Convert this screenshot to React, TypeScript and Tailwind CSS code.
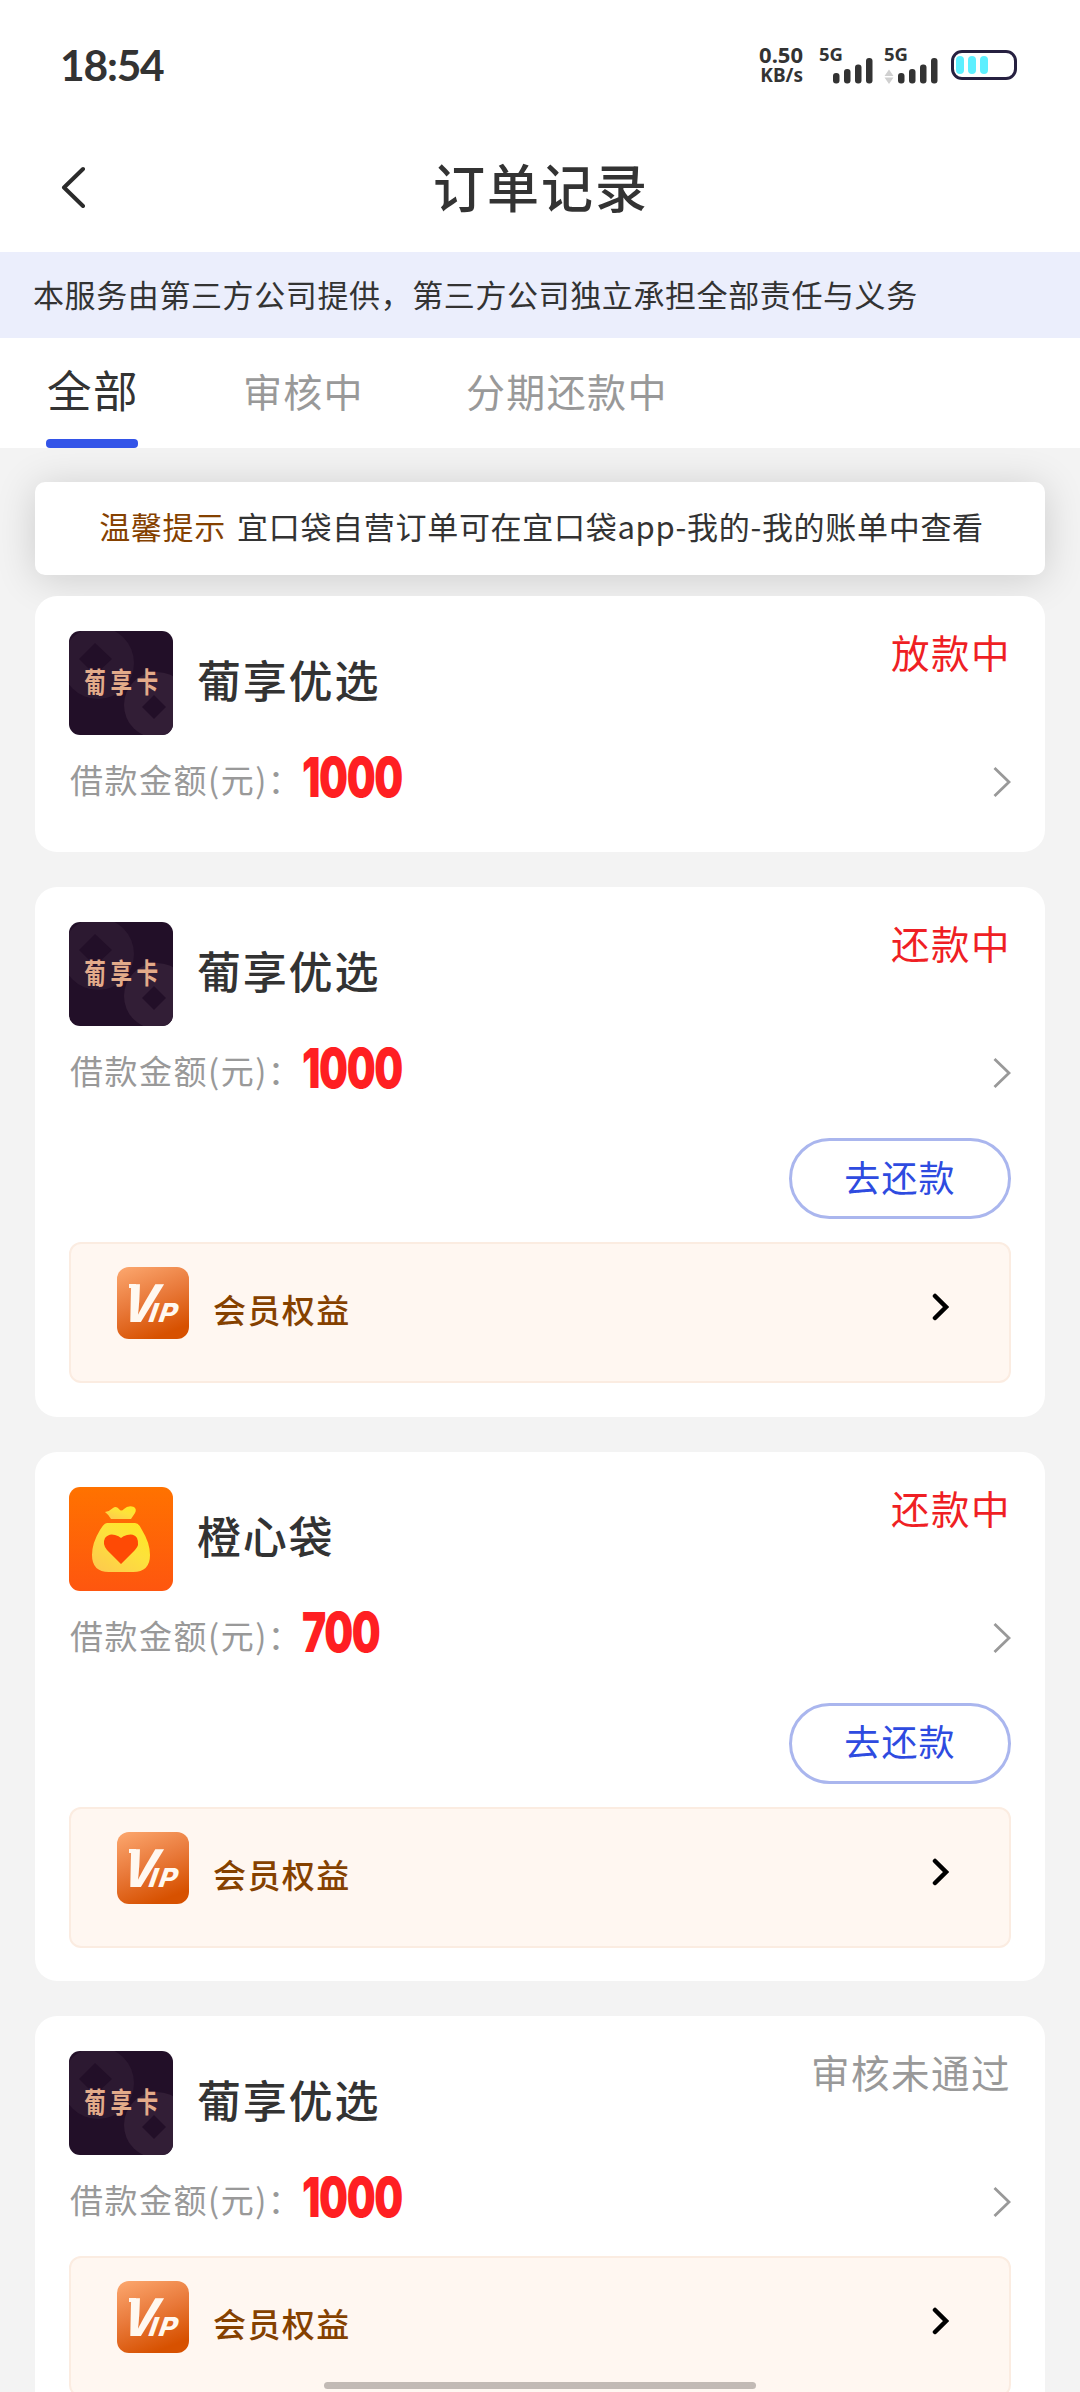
import { clsx } from 'clsx'

type Order = {
  logo: 'puxiang' | 'chengxin'
  name: string
  amount: number
  status: string
  failed?: boolean
  repay?: boolean
  vip?: boolean
}

const orders: Order[] = [
  { logo: 'puxiang', name: '葡享优选', amount: 1000, status: '放款中' },
  { logo: 'puxiang', name: '葡享优选', amount: 1000, status: '还款中', repay: true, vip: true },
  { logo: 'chengxin', name: '橙心袋', amount: 700, status: '还款中', repay: true, vip: true },
  { logo: 'puxiang', name: '葡享优选', amount: 1000, status: '审核未通过', failed: true, vip: true },
]

function PuxiangLogo() {
  return (
    <svg viewBox="0 0 104 104" className="h-[104px] w-[104px] shrink-0 rounded-[11px] bg-[#220f28]">
      <circle cx="29" cy="32" r="36" fill="#2c1931" />
      <circle cx="88" cy="74" r="33" fill="#321e36" />
      <path d="M26 12 L43 28 L26 44 L10 28 Z" fill="#220f28" />
      <path d="M85 64 L97 76 L85 88 L73 76 Z" fill="#220f28" />
      <g
        fill="#e3ab8a"
        textAnchor="middle"
        className="font-['Noto_Sans_CJK_SC',sans-serif] text-[24px] font-bold"
        transform="translate(0 62) scale(0.9 1.2)"
      >
        <text x="29" y="0">葡</text>
        <text x="58" y="0">享</text>
        <text x="87" y="0">卡</text>
      </g>
    </svg>
  )
}

function ChengxinLogo() {
  return (
    <svg viewBox="0 0 104 104" className="h-[104px] w-[104px] shrink-0 rounded-[11px]">
      <defs>
        <linearGradient id="orange" x1="0" y1="0" x2="0" y2="1">
          <stop offset="0" stopColor="#ff7200" />
          <stop offset="1" stopColor="#fe560f" />
        </linearGradient>
        <linearGradient id="bag" x1="1" y1="0" x2="0.2" y2="1">
          <stop offset="0" stopColor="#ffe81f" />
          <stop offset="0.5" stopColor="#fde13c" />
          <stop offset="1" stopColor="#fdcb4c" />
        </linearGradient>
      </defs>
      <rect width="104" height="104" fill="url(#orange)" />
      <path
        d="M36 25 Q41 24 44 21 Q47 18.500 50 22 Q52 25 55 22 Q59 18 65 20 Q68 22 66 26 L62 32 H42 Q40 28 36 25 Z"
        fill="url(#bag)"
      />
      <path
        d="M38 36 H66 Q70 36 73 43 Q81 56 81 68 Q81 85 64 85 H40 Q23 85 23 68 Q23 56 31 43 Q35 36 38 36 Z"
        fill="url(#bag)"
      />
      <path
        d="M52 77 L38 63 Q33 57 36 51 Q40 46 46 48 Q50 49 52 51 Q54 49 58 48 Q65 46 68 51 Q71 58 66 63 Z"
        fill="#fe4a05"
      />
    </svg>
  )
}

function VipIcon() {
  return (
    <svg viewBox="0 0 72 72" className="h-[72px] w-[72px] shrink-0 rounded-[12px]">
      <defs>
        <linearGradient id="vip" x1="0.1" y1="0" x2="0.5" y2="1">
          <stop offset="0" stopColor="#fba56c" />
          <stop offset="0.5" stopColor="#e97a3b" />
          <stop offset="1" stopColor="#d75100" />
        </linearGradient>
      </defs>
      <rect width="72" height="72" fill="url(#vip)" />
      <rect x="12" y="17" width="7" height="4" fill="#fff8f0" />
      <g fill="#fff8f0" className="font-['Inter',sans-serif] font-extrabold italic" transform="translate(0 55) skewX(-10)">
        <text x="3" y="0" textLength="35" lengthAdjust="spacingAndGlyphs" className="text-[52px]">V</text>
        <text x="31" y="0" textLength="8" lengthAdjust="spacingAndGlyphs" className="text-[26px]">I</text>
        <text x="41" y="0" textLength="18" lengthAdjust="spacingAndGlyphs" className="text-[26px]">P</text>
      </g>
    </svg>
  )
}

function Signal({ arrows }: { arrows?: boolean }) {
  return (
    <svg viewBox="0 0 56 40" className="h-10 w-14 overflow-visible">
      <text
        x="0"
        y="16"
        fill="#333"
        textLength="24"
        lengthAdjust="spacingAndGlyphs"
        className="font-['Noto_Sans',sans-serif] text-[18px] font-bold"
      >
        5G
      </text>
      <g fill="#333">
        <rect x="14" y="28" width="6.500" height="10.500" rx="3" />
        <rect x="25" y="24" width="6.500" height="14.500" rx="3" />
        <rect x="36" y="19.500" width="6.500" height="19" rx="3" />
        <rect x="47" y="13" width="6.500" height="25.500" rx="3" />
      </g>
      {arrows && <path d="M0.500 31 L5 24.500 L9.500 31 Z M0.500 32.500 L5 39 L9.500 32.500 Z" fill="#d0d0d0" />}
    </svg>
  )
}

function StatusBar() {
  return (
    <div className="flex h-[128px] shrink-0 items-center justify-between pt-[2px] pr-[63px] pl-[60px] text-[#333]">
      <span className="font-['Lato',sans-serif] text-[42.500px] leading-none font-bold tracking-[-1.200px]">18:54</span>
      <div className="flex items-center">
        <div className="mr-[16px] mb-[2px] flex flex-col items-end font-['Noto_Sans',sans-serif] font-bold">
          <span className="text-[22px] leading-[21px]">0.50</span>
          <span className="text-[19px] leading-[20px]">KB/s</span>
        </div>
        <div className="mr-[9px]">
          <Signal />
        </div>
        <div className="mr-[11px]">
          <Signal arrows />
        </div>
        <div className="flex h-[30px] w-[66px] items-center gap-1 rounded-[11px] border-3 border-[#262040] pl-[2px]">
          <i className="h-[18px] w-2 rounded-full bg-[#5eefff]" />
          <i className="h-[18px] w-2 rounded-full bg-[#5eefff]" />
          <i className="h-[18px] w-2 rounded-full bg-[#5eefff]" />
        </div>
      </div>
    </div>
  )
}

function OrderCard({ order }: { order: Order }) {
  return (
    <div
      className={clsx(
        'mb-[35px] shrink-0 rounded-[22px] bg-white px-[34px] pt-[35px]',
        order.vip ? 'pb-[33.500px]' : 'pb-[37px]'
      )}
    >
      <div className="flex h-[104px]">
        {order.logo === 'puxiang' ? <PuxiangLogo /> : <ChengxinLogo />}
        <span className="mb-[8px] ml-6 flex-1 self-center text-[44px] leading-none font-medium tracking-[1.800px]">
          {order.name}
        </span>
        <span
          className={clsx(
            'mt-[1px] text-[38.500px] leading-none tracking-[1.500px]',
            order.failed ? 'text-[#999]' : 'text-[#ef1f24]'
          )}
        >
          {order.status}
        </span>
      </div>

      <div className="flex h-[80px] items-center pt-[14px]">
        <span className="mb-[5px] w-[233px] shrink-0 pl-px text-[33px] leading-none tracking-[1.500px] whitespace-nowrap text-[#999]">
          借款金额(元)：
        </span>
        <span className="mb-[10px] origin-left scale-x-[0.740] font-['Inter',sans-serif] text-[55px] leading-none font-black tracking-[-1.800px] text-[#ff1f22]">
          {order.amount}
        </span>
        <svg viewBox="0 0 18 30" className="ml-auto h-[30px] w-[18px]" fill="none" stroke="#999" strokeWidth="2.800">
          <path d="M1.500 1 L16 15 L1.500 29" />
        </svg>
      </div>

      {order.repay && (
        <button className="mt-[32px] ml-auto flex h-[81px] w-[222px] items-center justify-center rounded-full border-3 border-[#aab6ee] pb-[6px] text-[36px] leading-none tracking-[1.200px] text-[#2e4be0]">
          去还款
        </button>
      )}

      {order.vip && (
        <div
          className={clsx(
            'flex h-[141px] items-start rounded-[12px] border-2 border-[#fbece1] bg-[#fff7f1] pt-[23px] pr-[60px] pl-[46px]',
            order.repay ? 'mt-[23px]' : 'mt-[21px]'
          )}
        >
          <VipIcon />
          <span className="mt-[26px] ml-6 text-[33px] leading-none font-medium tracking-[1.400px] text-[#854100]">
            会员权益
          </span>
          <svg
            viewBox="0 0 17 28"
            className="mt-[26px] ml-auto h-7 w-[17px]"
            fill="none"
            stroke="#000"
            strokeWidth="4.500"
            strokeLinecap="round"
          >
            <path d="M3 3 L14 14 L3 25" />
          </svg>
        </div>
      )}
    </div>
  )
}

export default function App() {
  return (
    <div
      lang="zh-CN"
      className="relative flex h-[2392px] w-[1080px] flex-col overflow-hidden bg-[#f3f3f3] font-['Noto_Sans_CJK_SC',sans-serif] text-[#333]"
    >
      <div className="bg-white">
        <StatusBar />
        <header className="flex h-[124px] items-center px-[61px] pb-[7px]">
          <svg
            viewBox="0 0 26 42"
            className="h-[42px] w-[26px]"
            fill="none"
            stroke="#2b2b2b"
            strokeWidth="4"
            strokeLinecap="round"
            strokeLinejoin="round"
          >
            <path d="M22 3 L3 21.500 L22 40" />
          </svg>
          <h1 className="mr-[24px] mb-[2px] flex-1 text-center text-[52px] leading-none font-medium tracking-[2px]">
            订单记录
          </h1>
        </header>
      </div>

      <div className="flex h-[86px] shrink-0 items-center bg-[#ebeefc] pb-[4px] pl-[33px] text-[31px] leading-none tracking-[0.600px]">
        本服务由第三方公司提供，第三方公司独立承担全部责任与义务
      </div>

      <nav className="flex h-[110px] shrink-0 bg-white pl-[46px] leading-none text-[#999]">
        <div className="flex w-[92px] flex-col justify-between">
          <span className="mt-[29px] pl-px text-[44.500px] tracking-[1.500px] whitespace-nowrap text-[#333]">全部</span>
          <i className="h-[9px] w-full rounded-[4px] bg-[#3354e8]" />
        </div>
        <span className="mt-[33px] ml-[105px] text-[39px] tracking-[1.300px]">审核中</span>
        <span className="mt-[33px] ml-[102px] text-[39px] tracking-[1.400px]">分期还款中</span>
      </nav>

      <div className="flex flex-col px-[35px] pt-[34px]">
        <div className="mb-[21px] flex h-[93px] shrink-0 items-center justify-center gap-[11px] rounded-[10px] bg-white pb-[6px] pl-[3px] text-[31px] leading-none tracking-[0.700px] whitespace-nowrap shadow-[0_4px_40px_rgba(0,0,0,0.16)]">
          <span className="text-[#854100]">温馨提示</span>
          <span>宜口袋自营订单可在宜口袋app-我的-我的账单中查看</span>
        </div>
        {orders.map((order, i) => (
          <OrderCard key={i} order={order} />
        ))}
      </div>

      {/* gesture bar */}
      <div className="absolute bottom-[3px] left-[324px] h-[7px] w-[432px] rounded-full bg-[#c2bab5]" />
    </div>
  )
}
